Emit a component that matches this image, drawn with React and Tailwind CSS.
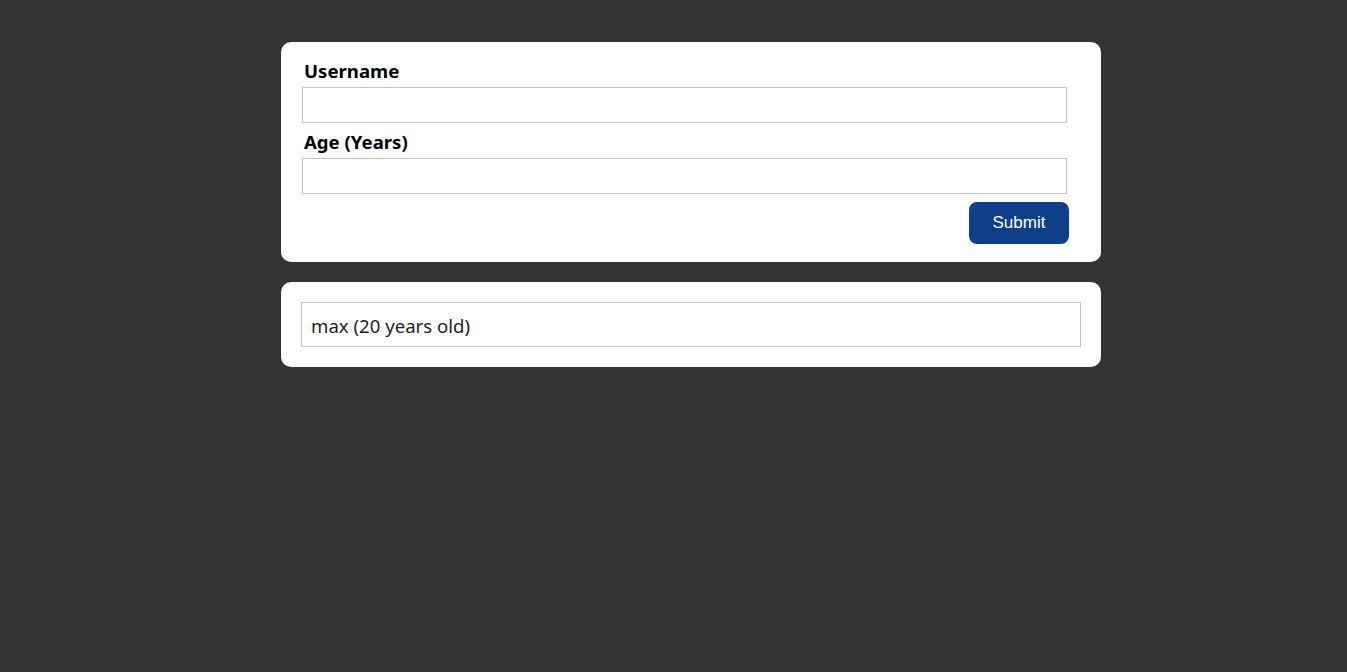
export default function App() {
  return (
    <div className="min-h-screen w-full bg-[#333333] pt-[42px] font-['Noto_Sans','Open_Sans',sans-serif]">
      <div className="ml-[281px] w-[820px] rounded-[10px] bg-white px-[21px] pt-[17px] pb-[18px]">
        <form className="flex flex-col" onSubmit={(e) => e.preventDefault()}>
          <label className="block text-[18.6px] leading-6 font-bold text-black ml-[2px] mb-[4px]">Username</label>
          <input className="block h-9 w-[765px] border border-[#c4c4c4] px-1 outline-none" />
          <label className="mt-[7px] block text-[18.6px] leading-6 font-bold text-black ml-[2px] mb-[4px]">Age (Years)</label>
          <input className="block h-9 w-[765px] border border-[#c4c4c4] px-1 outline-none" />
          <button
            type="submit"
            className="mt-2 ml-auto mr-[11px] h-[42px] w-[100px] rounded-[8px] bg-[#0f3f88] font-['Liberation_Sans',sans-serif] text-[17px] text-white"
          >
            Submit
          </button>
        </form>
      </div>
      <div className="ml-[281px] mt-5 w-[820px] rounded-[10px] bg-white p-5">
        <div className="flex h-[45px] w-[780px] items-center border border-[#c4c4c4] pl-[9px] pt-[3px] text-[18.6px] text-[#1e1e1e]">
          max (20 years old)
        </div>
      </div>
    </div>
  );
}
